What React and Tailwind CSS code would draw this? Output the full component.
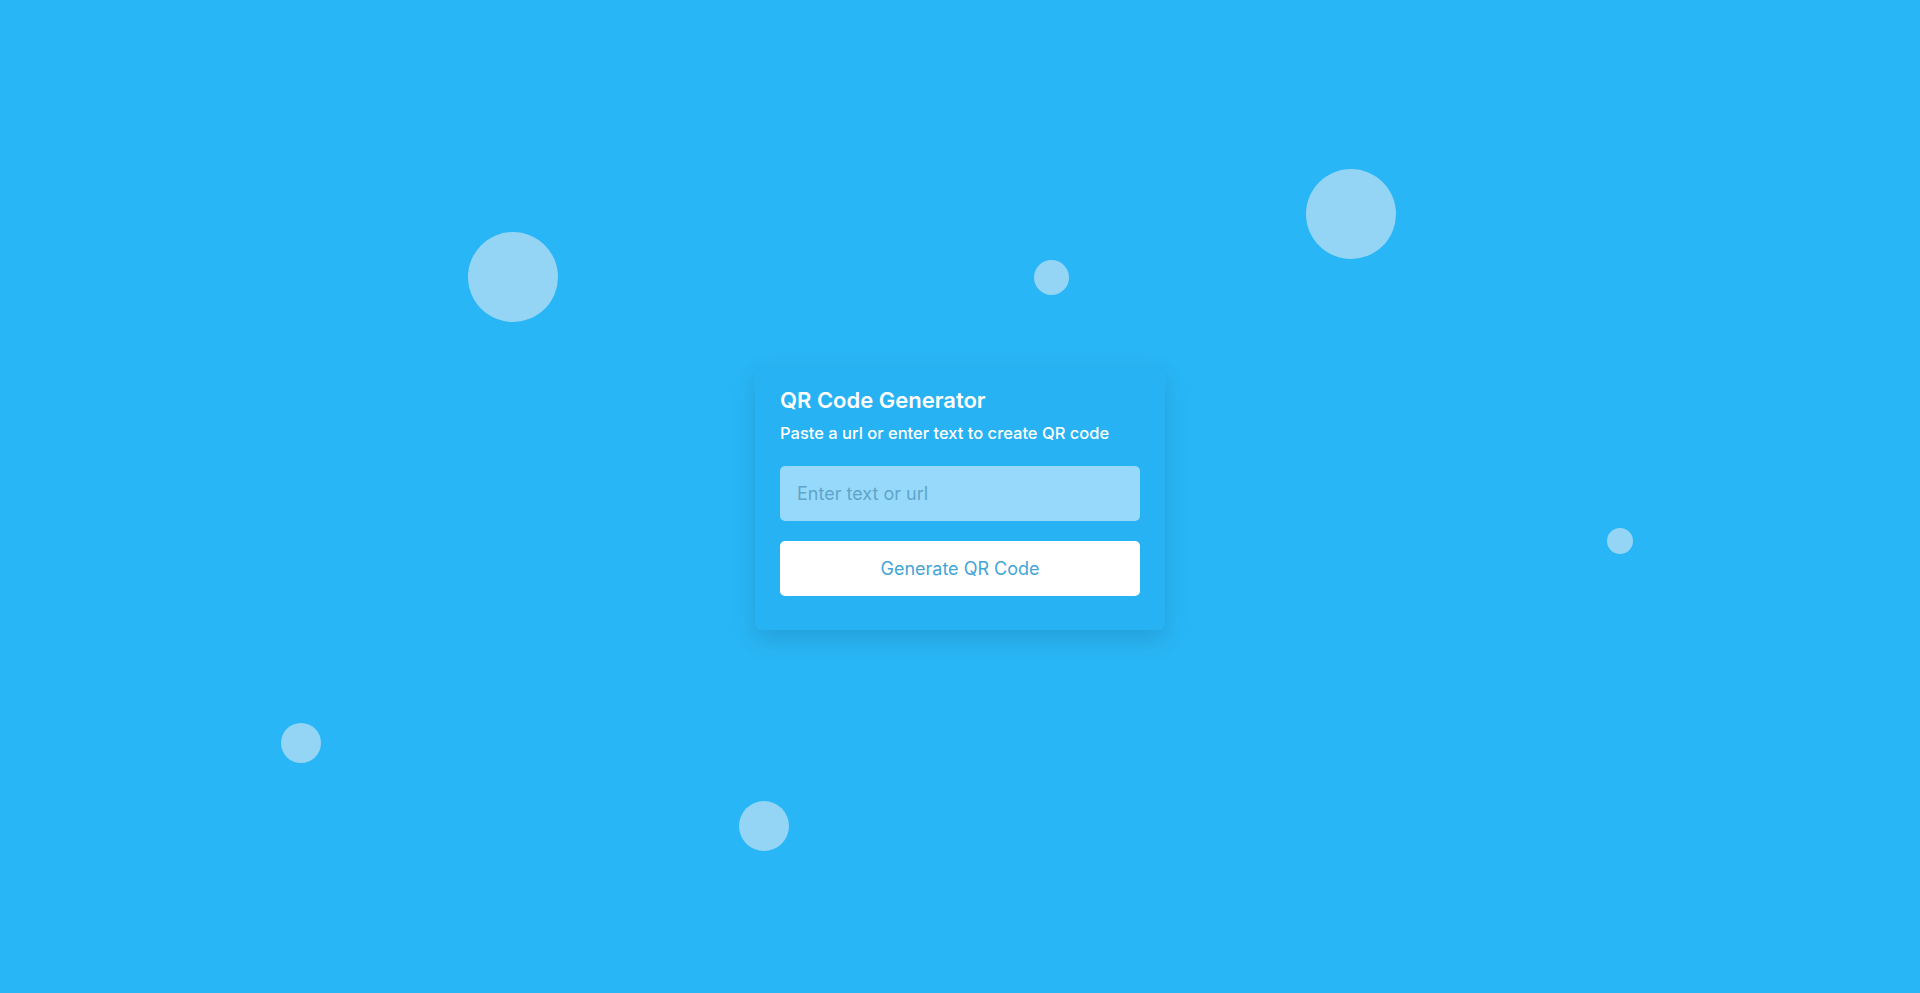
const bubbles = [
  { cls: "left-[468px] top-[232px] h-[90px] w-[90px]" },
  { cls: "left-[1306px] top-[169px] h-[90px] w-[90px]" },
  { cls: "left-[1034px] top-[260px] h-[35px] w-[35px]" },
  { cls: "left-[1607px] top-[528px] h-[26px] w-[26px]" },
  { cls: "left-[281px] top-[723px] h-[40px] w-[40px]" },
  { cls: "left-[739px] top-[801px] h-[50px] w-[50px]" },
];

export default function App() {
  return (
    <div
      className="relative flex h-[993px] w-full items-center justify-center overflow-hidden bg-[#29b6f6]"
      style={{ fontFamily: "Inter, 'Noto Sans', sans-serif" }}
    >
      {bubbles.map((b, i) => (
        <span key={i} className={`absolute rounded-full bg-[#94d5f6] ${b.cls}`} />
      ))}

      <div className="relative z-10 mt-[2px] w-[410px] rounded-md bg-[#26b2f3] px-[25px] pb-[34px] pt-[21px] shadow-[0_10px_25px_rgba(0,0,0,0.12)]">
        <h1 className="text-[22px] font-semibold leading-[28px] text-white">QR Code Generator</h1>
        <p className="mt-[7px] text-[16.5px] font-medium leading-[24px] text-white">
          Paste a url or enter text to create QR code
        </p>
        <input
          type="text"
          placeholder="Enter text or url"
          className="mt-[21px] block h-[55px] w-full rounded-[5px] bg-[#97d9fb] px-[17px] text-[18px] text-[#3b8fb8] outline-none placeholder:text-[#5fa5c9]"
        />
        <button className="mt-[20px] block h-[55px] w-full rounded-[5px] bg-white text-[18px] text-[#45a5d6]">
          Generate QR Code
        </button>
      </div>
    </div>
  );
}
